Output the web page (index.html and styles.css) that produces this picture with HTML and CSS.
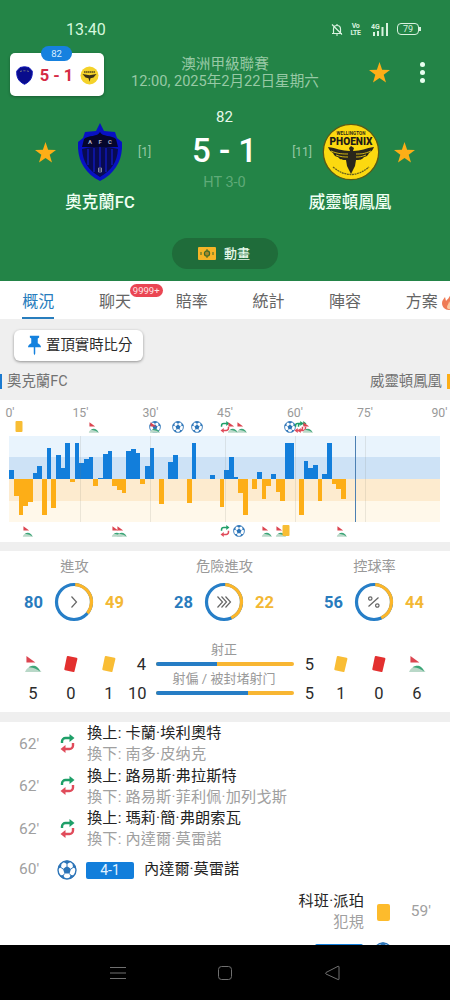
FILE: index.html
```html
<!DOCTYPE html>
<html lang="zh-Hant">

<head>
    <meta charset="utf-8">
    <title>奧克蘭FC 5 - 1 威靈頓鳳凰</title>
    <link rel="stylesheet" href="styles.css">
</head>

<body>
    <!-- shared icons -->
    <svg width="0" height="0" class="sprite">
        <symbol id="star" viewBox="0 0 20 20">
            <path fill="#fdae17" d="M10 0l2.5 7.3 7.5.2-6 4.7 2.2 7.4L10 15.200l-6.200 4.400L6 12.200 0 7.500l7.500-.2z" />
        </symbol>
        <symbol id="ball" viewBox="0 0 20 20">
            <circle cx="10" cy="10" r="9" fill="#fff" stroke="#2d75b8" stroke-width="1.400" />
            <path fill="#2d75b8" d="M10 6l4 3-1.500 4.600h-5L6 9zM5.500 1.500L10 4l4.500-2.500L10 .5zM.8 9l3.200-1.500.6-4.500L1.500 6zM19.200 9l-3.200-1.500-.6-4.500L18.500 6zM2.500 15.500l3.700-.4 2 4-3-.9zM17.500 15.500l-3.700-.4-2 4 3-.9z" />
            <path fill="none" stroke="#2d75b8" d="M10 6V3M6 9L3.400 7M14 9l2.600-2M7.500 13.600L6 15.800M12.500 13.600l1.500 2.200" />
        </symbol>
        <symbol id="corner" viewBox="0 0 18 18">
            <path fill="#dc4550" d="M1.500 0.500l9.500 7h-9.500z" />
            <path fill="#b9d8c8" d="M0 17.500c3-8 12-8.500 17.500 0z" />
            <path fill="#3da678" d="M4 12.500c4-3 10-2 12 4.500-3-2-6-4-12-4.500z" />
        </symbol>
        <symbol id="card" viewBox="0 0 14 18">
            <path fill="currentColor" d="M4 1l8.600 1.800a1 1 0 0 1 .8 1.200l-2.900 12.200a1 1 0 0 1-1.200.8l-8.200-1.800a1 1 0 0 1-.8-1.200L2.800 1.800A1 1 0 0 1 4 1z" />
        </symbol>
        <symbol id="sub" viewBox="0 0 15 19">
            <path fill="none" stroke="#1e9f68" stroke-width="2.400" d="M2 9V7.500a3.500 3.500 0 0 1 3.500-3.500h5" />
            <path fill="#1e9f68" d="M9.500 0l5 4-5 4z" />
            <path fill="none" stroke="#e04b5a" stroke-width="2.400" d="M13 9v2.500a3.500 3.500 0 0 1-3.500 3.500h-5" />
            <path fill="#e04b5a" d="M5.500 11l-5 4 5 4z" />
        </symbol>
        <symbol id="auckland" viewBox="0 0 44 58">
            <path fill="#0711c4" d="M22 0l4 8 11 1 2 6 5 4c1 17-6 31-22 39C6 50-1 36 0 19l5-4 2-6 11-1z" />
            <path fill="#05062c" d="M22 9c2 5 12 3 16 7l2 8H4l2-8c4-4 14-2 16-7z" />
            <path fill="#080b52" d="M4 26c11-3 25-3 36 0-1 13-6 21-18 28C10 47 5 39 4 26z" />
            <path fill="none" stroke="#111bd0" stroke-width="1.200" d="M10 26v16M16 25v24M22 24v20M28 25v24M34 26v16" />
            <path fill="none" stroke="#9d9eae" stroke-width=".8" d="M20.500 45h3v4h-3zM20.500 47h3" />
        </symbol>
        <symbol id="phoenix" viewBox="0 0 58 58">
            <circle cx="29" cy="29" r="27.700" fill="#fcd910" stroke="#5b5a15" stroke-width="1.300" />
            <path fill="#29261b" d="M29 23l3 2-1 3c8 0 13-3 21-4-1 3-3 5-5 6-1 3-4 4-5 4-2 3-5 3-8 3l-1 6-4 8-4-8-1-6c-3 0-6 0-8-3-1 0-4-1-5-4-2-1-4-3-5-6 8 1 14 4 22 4l-1-3z" />
            <path fill="none" stroke="#fcd910" stroke-width=".8" d="M9 28c7 3 12 3 17 3M14 32c5 2 8 2 12 2M49 28c-7 3-10 3-15 3M44 32c-5 2-7 2-10 2" />
            <path fill="none" stroke="#67601a" stroke-width="1.300" stroke-dasharray="2 .6" d="M11 44q18 15 36 0" />
        </symbol>
    </svg>

    <header class="match-header">
        <div class="status-bar">
            <span class="clock">13:40</span>
            <div class="status-icons">
                <svg class="bell" viewBox="0 0 12 13" fill="none" stroke="#d9f2df" stroke-width="1.200">
                    <path d="M1 10.500h10M2.500 10V6a3.500 3.500 0 0 1 7 0v4M6 1v1.500M5 12h2M1 1.500l10 10" />
                </svg>
                <span class="volte">Vo<br>LTE</span>
                <svg class="signal" viewBox="0 0 18 14" fill="#d9f2df">
                    <text x="0" y="6.500" font-size="7" font-weight="700">4G</text>
                    <path d="M2 10h2v4H2zM6 9h2v5H6zM10.500 5h2v9h-2zM15 1h2v13h-2z" />
                </svg>
                <span class="battery">79</span>
            </div>
        </div>

        <div class="league-row">
            <div class="league">
                <div>澳洲甲級聯賽</div>
                <div>12:00, 2025年2月22日星期六</div>
            </div>
            <svg class="star"><use href="#star" /></svg>
            <div class="menu"><i></i><i></i><i></i></div>
        </div>

        <div class="float-score">
            <span class="float-minute">82</span>
            <svg class="float-logo" viewBox="0 0 17 19">
                <path fill="#090c8c" stroke="#1219b8" d="M4 1.500q4.500-1.500 9 0l3.200 3.500c.5 6-1.500 10.500-7.700 13.300C2.300 15.500.3 11 .8 5z" />
                <path fill="none" stroke="#77777f" stroke-dasharray="2 1.500" d="M4 5.500q4.500-1.500 9 0" />
            </svg>
            <b>5 - 1</b>
            <svg class="float-logo away" viewBox="0 0 19 19">
                <circle cx="9.500" cy="9.500" r="9" fill="#f4d22a" />
                <path fill="none" stroke="#55481a" stroke-width="1.600" stroke-dasharray="1.600 .4" d="M4 6h11" />
                <path fill="#3a3118" d="M2.500 8l7 1.200 7-1.200-3 3.500-3 .8-1 3.500-1-3.500-3-.8z" />
            </svg>
        </div>

        <div class="teams">
            <div class="team-side">
                <svg class="star"><use href="#star" /></svg>
                <svg class="logo home" viewBox="0 0 44 58">
                    <use href="#auckland" />
                    <text x="22" y="21" font-size="6" font-weight="700" text-anchor="middle" textLength="24" fill="#b3b3c4">A F C</text>
                </svg>
                <span class="rank">[1]</span>
            </div>
            <div class="score">
                <div class="minute">82</div>
                <div class="goals">5 - 1</div>
                <div class="half-time">HT 3-0</div>
            </div>
            <div class="team-side right">
                <span class="rank">[11]</span>
                <svg class="logo away" viewBox="0 0 58 58">
                    <use href="#phoenix" />
                    <text x="29" y="12" font-size="4.500" font-weight="700" text-anchor="middle" textLength="29" fill="#28271a">WELLINGTON</text>
                    <text x="29" y="22" font-size="11.500" font-weight="900" text-anchor="middle" textLength="43" lengthAdjust="spacingAndGlyphs" fill="#1c1b16">PHOENIX</text>
                </svg>
                <svg class="star"><use href="#star" /></svg>
            </div>
        </div>
        <div class="team-names">
            <span>奧克蘭FC</span>
            <span>威靈頓鳳凰</span>
        </div>

        <div class="animation-button">
            <svg viewBox="0 0 18 13">
                <rect width="18" height="13" rx="1" fill="#f5b427" />
                <path fill="none" stroke="#3d6b2b" d="M9 2v9M3 5v3M15 5v3" />
                <circle cx="9" cy="6.500" r="2.600" fill="#a88a28" stroke="#3d6b2b" stroke-width="1.200" />
            </svg>
            <span>動畫</span>
        </div>
    </header>

    <nav class="tabs">
        <div class="tab active"><span>概況</span></div>
        <div class="tab"><span>聊天</span><em class="badge">9999+</em></div>
        <div class="tab"><span>賠率</span></div>
        <div class="tab"><span>統計</span></div>
        <div class="tab"><span>陣容</span></div>
        <div class="tab"><span>方案</span>
            <svg class="fire" viewBox="0 0 14 17">
                <path fill="#ef7b55" d="M9 0c1 4 5 6 5 11 0 4-3 6-7 6s-7-3-7-7c0-3 2-4 3-6l1 4c2-2 4-4 5-8z" />
                <path fill="#fbc9a0" d="M7 8c1 3 3 3 3 6s-5 3-5 0c0-2 2-3 2-6z" />
            </svg>
        </div>
    </nav>

    <main>
        <section class="pin-section">
            <div class="pin-button">
                <svg viewBox="0 0 14 21" fill="#1481de">
                    <path d="M2 0h10v2l-1.500 1v5c2 1 3.500 2.500 3.500 4.500H0C0 10.500 1.500 9 3.500 8V3L2 2zM6.200 12h1.600v7L7 21l-.8-2z" />
                </svg>
                <span>置頂實時比分</span>
            </div>
            <div class="legend">
                <span class="legend-home">奧克蘭FC</span>
                <span class="legend-away">威靈頓鳳凰</span>
            </div>
        </section>

        <section class="momentum">
            <div class="axis">
                <span>0'</span><span>15'</span><span class="added">30'</span><span>45'</span><span>60'</span><span class="added">75'</span><span>90'</span>
            </div>
            <div class="markers" id="home-markers"></div>
            <div class="plot" id="plot"></div>
            <div class="markers" id="away-markers"></div>
        </section>

        <section class="stats">
            <div class="rings">
                <div class="ring-stat">
                    <h4>進攻</h4>
                    <div class="ring-row">
                        <b class="home-value">80</b>
                        <svg class="ring" viewBox="0 0 40 40">
                            <circle class="ring-home" cx="20" cy="20" r="17.500" />
                            <circle class="ring-away" cx="20" cy="20" r="17.500" pathLength="100" stroke-dasharray="35 100" />
                            <path d="M17.500 14.500l5 5.500-5 5.500" />
                        </svg>
                        <b class="away-value">49</b>
                    </div>
                </div>
                <div class="ring-stat">
                    <h4>危險進攻</h4>
                    <div class="ring-row">
                        <b class="home-value">28</b>
                        <svg class="ring" viewBox="0 0 40 40">
                            <circle class="ring-home" cx="20" cy="20" r="17.500" />
                            <circle class="ring-away" cx="20" cy="20" r="17.500" pathLength="100" stroke-dasharray="42 100" />
                            <path d="M13.500 14.500l5 5.500-5 5.500M17.500 14.500l5 5.500-5 5.500M21.500 14.500l5 5.500-5 5.500" />
                        </svg>
                        <b class="away-value">22</b>
                    </div>
                </div>
                <div class="ring-stat">
                    <h4>控球率</h4>
                    <div class="ring-row">
                        <b class="home-value">56</b>
                        <svg class="ring" viewBox="0 0 40 40">
                            <circle class="ring-home" cx="20" cy="20" r="17.500" />
                            <circle class="ring-away" cx="20" cy="20" r="17.500" pathLength="100" stroke-dasharray="42 100" />
                            <path d="M14.500 24.500l10-9M18 16.500a1.700 1.700 0 1 1-3.400 0a1.700 1.700 0 1 1 3.400 0M25 23.500a1.700 1.700 0 1 1-3.400 0a1.700 1.700 0 1 1 3.400 0" />
                        </svg>
                        <b class="away-value">44</b>
                    </div>
                </div>
            </div>

            <div class="totals">
                <div class="count"><svg class="corner"><use href="#corner" /></svg><span>5</span></div>
                <div class="count"><svg class="card red"><use href="#card" /></svg><span>0</span></div>
                <div class="count"><svg class="card yellow"><use href="#card" /></svg><span>1</span></div>
                <div class="shots">
                    <div class="shot-label">射正</div>
                    <div class="shot-row"><span>4</span><div class="bar"><i style="width: 44.4%"></i></div><span>5</span></div>
                    <div class="shot-label">射偏 / 被封堵射门</div>
                    <div class="shot-row"><span>10</span><div class="bar"><i style="width: 66.7%"></i></div><span>5</span></div>
                </div>
                <div class="count"><svg class="card yellow"><use href="#card" /></svg><span>1</span></div>
                <div class="count"><svg class="card red"><use href="#card" /></svg><span>0</span></div>
                <div class="count"><svg class="corner"><use href="#corner" /></svg><span>6</span></div>
            </div>
        </section>

        <section class="events">
            <div class="event">
                <span class="time">62'</span>
                <svg class="sub"><use href="#sub" /></svg>
                <div class="players"><div>換上: 卡蘭·埃利奧特</div><div class="out">換下: 南多·皮纳克</div></div>
            </div>
            <div class="event">
                <span class="time">62'</span>
                <svg class="sub"><use href="#sub" /></svg>
                <div class="players"><div>換上: 路易斯·弗拉斯特</div><div class="out">換下: 路易斯·菲利佩·加列戈斯</div></div>
            </div>
            <div class="event">
                <span class="time">62'</span>
                <svg class="sub"><use href="#sub" /></svg>
                <div class="players"><div>換上: 瑪莉·簡·弗朗索瓦</div><div class="out">換下: 內達爾·莫雷諾</div></div>
            </div>
            <div class="event goal">
                <span class="time">60'</span>
                <svg class="ball"><use href="#ball" /></svg>
                <span class="goal-score">4-1</span>
                <span>內達爾·莫雷諾</span>
            </div>
            <div class="event away">
                <span class="time">59'</span>
                <i class="booking"></i>
                <div class="players"><div>科班·派珀</div><div class="out">犯規</div></div>
            </div>
            <div class="event away next">
                <span class="time"></span>
                <svg class="ball"><use href="#ball" /></svg>
                <span class="goal-score"></span>
            </div>
        </section>
    </main>

    <footer class="system-nav">
        <svg viewBox="0 0 16 16"><path d="M0 2.500h16M0 8h16M0 13.500h16" /></svg>
        <svg viewBox="0 0 16 16"><rect x="1.500" y="1.500" width="13" height="13" rx="3" /></svg>
        <svg viewBox="0 0 16 16"><path d="M15 2v12q0 1-1 .5L2 9q-1-.8 0-1.500L14 1.300q1-.3 1 .7z" /></svg>
    </footer>

    <script src="script.js"></script>
</body>

</html>
```

FILE: styles.css
```css
* {
    box-sizing: border-box;
}

body {
    margin: 0;
    height: 1000px;
    display: flex;
    flex-direction: column;
    overflow: hidden;
    background: #fff;
    color: #2b2b2b;
    font-family: Roboto, "Noto Sans CJK TC", sans-serif;
    font-size: 15px;
}

svg {
    display: block;
    flex: none;
}

.sprite {
    position: absolute;
}

/* Header */
.match-header {
    position: relative;
    flex: none;
    height: 281px;
    background: #238447;
    color: #e6f8ea;
}

.status-bar {
    display: flex;
    justify-content: space-between;
    align-items: center;
    height: 58px;
    padding: 0 28px 0 66px;
}

.clock {
    font-size: 16px;
    color: #d5f8dd;
}

.status-icons {
    display: flex;
    align-items: center;
    color: #d9f2df;
}

.bell {
    width: 12px;
    height: 13px;
}

.volte {
    width: 11px;
    margin-left: 7px;
    padding-top: 1px;
    font-size: 7px;
    font-weight: 700;
    line-height: 7px;
    text-align: center;
    letter-spacing: -0.5px;
}

.signal {
    width: 18px;
    height: 14px;
    margin-left: 10px;
}

.battery {
    position: relative;
    width: 22px;
    height: 12px;
    margin: 0 3px 0 8px;
    border: 1.500px solid #d9f2df;
    border-radius: 4px;
    font-size: 9px;
    line-height: 10px;
    text-align: center;
}

.battery::after {
    content: "";
    position: absolute;
    right: -3px;
    top: 3px;
    width: 2px;
    height: 4px;
    background: #d9f2df;
}

.league-row {
    display: flex;
    align-items: center;
    height: 29px;
    padding: 0 25px 0 125px;
}

.league {
    width: 200px;
    color: #97c9a5;
    font-size: 14.600px;
    line-height: 17px;
    text-align: center;
    white-space: nowrap;
}

.star {
    width: 21px;
    height: 21px;
}

.league-row .star {
    margin-left: 44px;
}

.menu {
    display: flex;
    flex-direction: column;
    gap: 3px;
    margin-left: auto;
}

.menu i {
    width: 5px;
    height: 5px;
    border-radius: 50%;
    background: #e8fff0;
}

.float-score {
    position: absolute;
    left: 10px;
    top: 53px;
    width: 94px;
    height: 43px;
    display: flex;
    align-items: center;
    justify-content: space-between;
    padding: 1px 5px 0 6px;
    border-radius: 5px;
    background: #fff;
    box-shadow: 0 1px 3px rgba(0, 0, 0, 0.3);
    color: #d52b45;
    font-size: 16.500px;
}

.float-minute {
    position: absolute;
    left: 31px;
    top: -7px;
    width: 31px;
    height: 15px;
    border-radius: 8px;
    background: #1681df;
    color: #d8edff;
    font-size: 9.500px;
    line-height: 15px;
    text-align: center;
}

.float-logo {
    width: 17px;
    height: 19px;
}

.float-logo.away {
    width: 19px;
}

.teams {
    display: flex;
    justify-content: space-between;
    padding: 20px 35px 0;
    height: 103px;
}

.team-side {
    display: flex;
    align-items: center;
    width: 117px;
    height: 90px;
}

.team-side.right {
    justify-content: flex-end;
    width: 124px;
}

.logo {
    width: 58px;
    height: 58px;
}

.logo.home {
    width: 44px;
    margin-left: 22px;
}

.team-side.right .star {
    margin-left: 14px;
}

.logo.away {
    margin-left: 10px;
}

.rank {
    color: #97c9a5;
    font-size: 12px;
}

.home + .rank {
    margin-left: 16px;
}

.score {
    width: 100px;
    text-align: center;
    margin-left: 6px;
}

.minute {
    margin-top: 1px;
    font-size: 15px;
    line-height: 18px;
}

.goals {
    color: #fff;
    font-size: 33px;
    font-weight: 500;
    line-height: 50px;
    white-space: nowrap;
}

.half-time {
    color: #5faa78;
    font-size: 14.500px;
    line-height: 14px;
}

.team-names {
    display: flex;
    justify-content: space-between;
    padding: 1px 50px 0;
    font-size: 16.500px;
    font-weight: 500;
    line-height: 24px;
    color: #f0fff3;
}

.team-names span {
    width: 100px;
    text-align: center;
}

.animation-button {
    display: flex;
    align-items: center;
    justify-content: center;
    gap: 8px;
    width: 106px;
    height: 31px;
    margin: 23px auto 0 172px;
    padding-right: 2px;
    border-radius: 16px;
    background: #1f6c3a;
    font-size: 13px;
    font-weight: 500;
    line-height: 28px;
}

.animation-button svg {
    width: 18px;
    height: 13px;
}

/* Tabs */
.tabs {
    display: flex;
    flex: none;
    height: 38px;
    background: #fff;
}

.tab {
    position: relative;
    flex: none;
    width: 76.700px;
    display: flex;
    justify-content: center;
    color: #656565;
    font-size: 16px;
    line-height: 41px;
}

.tab span {
    height: 38px;
}

.tab.active span {
    color: #287dbd;
    border-bottom: 2px solid #287dbd;
}

.badge {
    position: absolute;
    left: 53px;
    top: 3px;
    width: 33px;
    height: 13px;
    border-radius: 7px;
    background: #ea4653;
    color: #ffe4e4;
    font-size: 9.500px;
    font-style: normal;
    line-height: 14px;
    text-align: center;
}

.fire {
    position: absolute;
    left: 59px;
    top: 12px;
    width: 14px;
    height: 17px;
}

main {
    flex: 1;
    min-height: 0;
    overflow: hidden;
}

/* Pin button and team legend */
.pin-section {
    height: 81px;
    padding-top: 11px;
    background: #efefef;
}

.pin-button {
    display: flex;
    align-items: center;
    gap: 5px;
    width: 129px;
    height: 31px;
    margin-left: 14px;
    padding-left: 14px;
    border-radius: 6px;
    background: #fff;
    box-shadow: 0 1px 3px rgba(0, 0, 0, 0.4);
    font-size: 14.400px;
    line-height: 30px;
    white-space: nowrap;
}

.pin-button svg {
    width: 13px;
    height: 21px;
}

.legend {
    display: flex;
    justify-content: space-between;
    margin-top: 13px;
    color: #727272;
    font-size: 14.400px;
    line-height: 15px;
}

.legend-home {
    padding-left: 5px;
    border-left: 2px solid #1b7ad0;
}

.legend-away {
    padding-right: 5px;
    border-right: 3px solid #fdae17;
}

/* Momentum chart */
.momentum {
    height: 151px;
    padding: 6px 10px 0 9.400px;
    border-bottom: 9px solid #efefef;
    background: #fff;
}

.axis {
    display: flex;
    height: 14px;
    margin-left: -4px;
    color: #999;
    font-size: 12.300px;
    line-height: 15px;
}

.axis span {
    flex: none;
    width: 70px;
    white-space: nowrap;
}

.axis span:first-child {
    width: 67px;
}

/* these quarters are wider because of added time */
.axis .added {
    width: 74.500px;
}

.axis span:last-child {
    width: 20px;
}

.markers {
    position: relative;
    height: 16px;
}

.markers svg {
    position: absolute;
    top: 1px;
    height: 12px;
    width: 12px;
    transform: translateX(-50%);
}

.markers svg.mark-corner {
    top: 2px;
    width: 11px;
    height: 11px;
}

.mark-card {
    color: #f8bd34;
}

#away-markers svg {
    margin-top: 2px;
}

.plot {
    position: relative;
    display: flex;
    width: 430.500px;
    height: 86px;
    background: linear-gradient(#e9f4fd 0 24.500%, #cde2f6 24.500% 50%, #fdebcf 50% 75.500%, #fff8ea 75.500%);
}

.slot {
    flex: 1;
    display: flex;
    flex-direction: column;
}

.half {
    display: flex;
    align-items: flex-end;
    height: 50%;
}

.half.down {
    align-items: flex-start;
}

.half i {
    width: 100%;
}

.up i {
    background: #127edb;
}

.down i {
    background: #fdae17;
}

.now {
    position: absolute;
    top: 0;
    height: 100%;
    width: 1px;
    background: #4c80b3;
}

.tick {
    position: absolute;
    top: 0;
    height: 100%;
    width: 1px;
    background: rgba(120, 120, 110, 0.15);
}

/* Match stats */
.stats {
    height: 171px;
    padding-top: 5px;
    border-bottom: 10px solid #efefef;
    background: #fff;
}

.rings {
    display: flex;
    justify-content: space-between;
    padding: 0 9px 0 8px;
}

.ring-stat {
    width: 133px;
}

.ring-stat h4 {
    margin: 0;
    color: #999;
    font-size: 14.200px;
    font-weight: 400;
    line-height: 20px;
    text-align: center;
}

.ring-row {
    display: flex;
    align-items: center;
    justify-content: center;
    gap: 11px;
    margin: 6px 1px 0 0;
    font-size: 16.500px;
}

.home-value {
    color: #287bbd;
}

.away-value {
    color: #f3b834;
}

.ring {
    width: 40px;
    height: 40px;
    fill: none;
    stroke: #666;
    stroke-width: 1.200;
}

.ring-home {
    stroke: #267ec7;
    stroke-width: 3.200;
}

.ring-away {
    stroke: #fcb62a;
    stroke-width: 3.200;
    transform: rotate(-86deg);
    transform-origin: center;
}

.totals {
    display: flex;
    padding: 21px 14px 0;
    font-size: 16.500px;
}

.count {
    display: flex;
    flex-direction: column;
    align-items: center;
    width: 38px;
    height: 60px;
    padding-top: 12px;
}

.count svg {
    height: 18px;
}

.count span {
    margin-top: 11px;
    line-height: 20px;
}

.corner {
    width: 17px;
}

.card {
    width: 14px;
}

.red {
    color: #e3302f;
}

.yellow {
    color: #f9bd35;
}

.shots {
    width: 194px;
}

.shot-label {
    height: 13px;
    padding-right: 2px;
    color: #999;
    font-size: 13px;
    line-height: 14px;
    text-align: center;
}

.shot-row {
    display: flex;
    align-items: center;
    height: 16px;
}

.shot-row span {
    width: 18px;
    text-align: right;
    white-space: nowrap;
}

.shot-row span:last-child {
    width: 20px;
}

.bar {
    width: 138px;
    height: 4px;
    margin-left: 10px;
    border-radius: 2px;
    overflow: hidden;
    background: #f8b632;
}

.bar i {
    display: block;
    height: 100%;
    background: #267dc5;
}

/* Event list */
.events {
    padding-top: 1px;
    font-size: 15.200px;
}

.event {
    display: flex;
    align-items: center;
    height: 42.500px;
    line-height: 21.250px;
    color: #242424;
    white-space: nowrap;
}

.time {
    width: 57px;
    padding-left: 19px;
    color: #a0a0a0;
    font-size: 15.500px;
}

.sub {
    width: 15px;
    height: 19px;
    margin: 0 12px 2px 3px;
}

.players {
    letter-spacing: 0.15px;
}

.out {
    color: #a0a0a0;
}

.event.goal {
    height: 39px;
}

.ball {
    width: 20px;
    height: 20px;
}

.goal-score {
    width: 48px;
    height: 17px;
    margin: 0 10px 0 9px;
    border-radius: 2px;
    background: #127edb;
    color: #e3f2ff;
    font-size: 14px;
    line-height: 17px;
    text-align: center;
}

.event.away {
    flex-direction: row-reverse;
    height: 45px;
    text-align: right;
}

.away .time {
    padding: 0 19px 0 0;
}

.booking {
    width: 13px;
    height: 17px;
    margin: 0 3px 0 13px;
    border-radius: 2px;
    background: #fdbb2c;
}

.event.away.next {
    height: 36px;
}

.next .ball {
    margin-bottom: 1px;
}

/* Android navigation */
.system-nav {
    display: flex;
    justify-content: center;
    align-items: center;
    gap: 91px;
    flex: none;
    height: 55px;
    background: #000;
}

.system-nav svg {
    width: 16px;
    height: 16px;
    fill: none;
    stroke: #707070;
}
```

FILE: script.js
```js
// Pressure per minute, positive = home, negative = away (max 128)
const pressure = [
    28, -50, -108, -79, -68, 17, 39, -108, 93, -86, 71, 32, 108, -10, 108,
    48, 60, 66, -21, 4, 73, 82, -21, -34, -42, 84, 90, 78, -16, 39,
    91, 0, -74, 0, 51, 71, 0, 0, -72, 108, 0, 0, 0, 13, 0, -82,
    27, 66, 5, -41, -108, 0, -29, 21, -60, -21, 14, -39, -66, 108, 108,
    0, -108, 54, 34, 41, -65, 15, 108, -16, -29, -60
];
const SLOTS = 92;
const ticks = [15, 30, 46, 61, 76];

// Event icons, x is the offset inside the chart
const homeMarkers = [
    ['card', 9.6], ['corner', 84.6], ['ball', 145.3], ['corner', 146], ['ball', 168.6], ['ball', 187.6],
    ['sub', 215.6], ['corner', 224], ['corner', 233], ['ball', 281], ['sub', 290], ['sub', 293], ['corner', 299]
];
const awayMarkers = [
    ['corner', 18.6], ['corner', 108], ['corner', 112.600], ['sub', 215.6], ['ball', 229.6],
    ['corner', 257.6], ['corner', 271.6], ['card', 276.6], ['corner', 332.6]
];

const plot = document.getElementById('plot');

for (let i = 0; i < SLOTS; i++) {
    const value = pressure[i] || 0;
    const size = Math.abs(value) / 128 * 100;
    const slot = document.createElement('div');
    slot.className = 'slot';
    slot.innerHTML =
        `<div class="half up"><i style="height: ${value > 0 ? size : 0}%"></i></div>` +
        `<div class="half down"><i style="height: ${value < 0 ? size : 0}%"></i></div>`;
    plot.appendChild(slot);
}

// vertical line over the bars
function addLine(className, minute) {
    const line = document.createElement('div');
    line.className = className;
    line.style.left = minute / SLOTS * 100 + '%';
    plot.appendChild(line);
}

ticks.forEach(minute => addLine('tick', minute));
addLine('now', 73.9);

function renderMarkers(id, markers) {
    document.getElementById(id).innerHTML = markers.map(([type, x]) => {
        if (type === 'card') {
            return `<svg class="mark-card" style="left: ${x}px" viewBox="0 0 12 12"><rect x="2.5" width="7" height="11" rx="1" fill="currentColor"/></svg>`;
        }
        return `<svg class="mark-${type}" style="left: ${x}px"><use href="#${type}"/></svg>`;
    }).join('');
}

renderMarkers('home-markers', homeMarkers);
renderMarkers('away-markers', awayMarkers);
```
